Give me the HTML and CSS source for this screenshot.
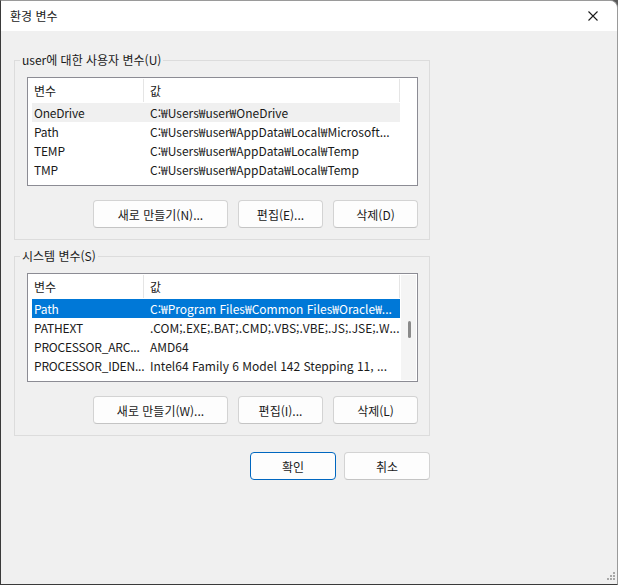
FILE: index.html
```html
<!DOCTYPE html>
<html lang="ko">
<head>
  <meta charset="UTF-8" />
  <title>환경 변수</title>
  <link rel="stylesheet" href="styles.css">
</head>
<body>

  <div class="window">
    <div class="titlebar">
      <span class="title">환경 변수</span>
      <button class="close" aria-label="닫기">
        <svg width="10" height="10" viewBox="0 0 10 10">
          <path d="M0.5 0.5 L9.5 9.5 M9.5 0.5 L0.5 9.5" stroke="#1b1b1b" stroke-width="1.1" fill="none" />
        </svg>
      </button>
    </div>

    <div class="content">
      <fieldset class="group">
        <legend>user에 대한 사용자 변수(U)</legend>
        <div class="list">
          <div class="list-main">
            <div class="list-head">
              <div class="hcell c1">변수</div>
              <div class="hcell c2">값</div>
            </div>
            <div class="row hover"><div class="c1">OneDrive</div><div class="c2">C:₩Users₩user₩OneDrive</div></div>
            <div class="row"><div class="c1">Path</div><div class="c2">C:₩Users₩user₩AppData₩Local₩Microsoft...</div></div>
            <div class="row"><div class="c1">TEMP</div><div class="c2">C:₩Users₩user₩AppData₩Local₩Temp</div></div>
            <div class="row"><div class="c1">TMP</div><div class="c2">C:₩Users₩user₩AppData₩Local₩Temp</div></div>
          </div>
          <div class="list-side"></div>
        </div>
        <div class="actions">
          <button class="btn wide">새로 만들기(N)...</button>
          <button class="btn">편집(E)...</button>
          <button class="btn">삭제(D)</button>
        </div>
      </fieldset>

      <fieldset class="group">
        <legend>시스템 변수(S)</legend>
        <div class="list">
          <div class="list-main">
            <div class="list-head">
              <div class="hcell c1">변수</div>
              <div class="hcell c2">값</div>
            </div>
            <div class="row selected"><div class="c1">Path</div><div class="c2">C:₩Program Files₩Common Files₩Oracle₩...</div></div>
            <div class="row"><div class="c1">PATHEXT</div><div class="c2">.COM;.EXE;.BAT;.CMD;.VBS;.VBE;.JS;.JSE;.W...</div></div>
            <div class="row"><div class="c1">PROCESSOR_ARC...</div><div class="c2">AMD64</div></div>
            <div class="row"><div class="c1">PROCESSOR_IDEN...</div><div class="c2">Intel64 Family 6 Model 142 Stepping 11, ...</div></div>
          </div>
          <div class="list-side scrollbar">
            <div class="thumb"></div>
          </div>
        </div>
        <div class="actions">
          <button class="btn wide">새로 만들기(W)...</button>
          <button class="btn">편집(I)...</button>
          <button class="btn">삭제(L)</button>
        </div>
      </fieldset>

      <div class="dialog-actions">
        <button class="btn main default">확인</button>
        <button class="btn main">취소</button>
      </div>
    </div>

    <svg class="grip" width="10" height="10" viewBox="0 0 10 10">
      <rect x="8" y="0" width="2" height="2" fill="#a8a8a8" />
      <rect x="5" y="3" width="2" height="2" fill="#a8a8a8" />
      <rect x="8" y="3" width="2" height="2" fill="#a8a8a8" />
      <rect x="2" y="6" width="2" height="2" fill="#a8a8a8" />
      <rect x="5" y="6" width="2" height="2" fill="#a8a8a8" />
      <rect x="8" y="6" width="2" height="2" fill="#a8a8a8" />
    </svg>
  </div>

</body>
</html>
```

FILE: styles.css
```css
* {
  box-sizing: border-box;
  margin: 0;
  padding: 0;
}

html, body {
  width: 618px;
  height: 585px;
  overflow: hidden;
  background: #5a5a5a;
  font-family: "Noto Sans CJK KR", "Noto Sans", sans-serif;
  font-size: 12px;
  color: #1a1a1a;
}

.window {
  position: relative;
  width: 618px;
  height: 585px;
  background: #f0f0f0;
  border: 1px solid #9a9a9a;
  border-left-color: #3a3a3a;
  border-bottom-color: #3a3a3a;
  border-radius: 0 8px 0 0;
  overflow: hidden;
}

.titlebar {
  height: 30px;
  background: #ffffff;
  display: flex;
  align-items: center;
  justify-content: space-between;
  padding-left: 9px;
}

.title {
  font-size: 12px;
  line-height: 16px;
  color: #1a1a1a;
  margin-top: -1px;
}

.close {
  width: 46px;
  height: 30px;
  border: none;
  background: transparent;
  display: flex;
  align-items: center;
  justify-content: center;
  padding-right: 3px;
}

.close svg {
  display: block;
}

.content {
  padding: 21px 0 0 13px;
}

.group {
  width: 416px;
  border: 1px solid #dcdcdc;
  padding: 9px 11px 11px 12px;
  margin-bottom: 8px;
}

.group legend {
  font-size: 12px;
  line-height: 16px;
  padding: 0 2px;
  margin-left: -7px;
  color: #1a1a1a;
}

.list {
  height: 109px;
  border: 1px solid #8c8c94;
  background: #ffffff;
  display: flex;
}

.list-main {
  width: 372px;
  padding-left: 4px;
}

.list-side {
  flex: 1;
}

.scrollbar {
  background: #f4f4f4;
  border: 1px solid #ffffff;
  display: flex;
  justify-content: center;
  padding-top: 46px;
}

.thumb {
  width: 3px;
  height: 17px;
  background: #8a8a8a;
  border-radius: 2px;
  margin-left: 1px;
}

.list-head {
  display: flex;
  height: 25px;
  align-items: stretch;
}

.hcell {
  display: flex;
  align-items: center;
  border-right: 1px solid #e5e5e5;
  margin-top: 1px;
  margin-bottom: 1px;
}

.list-head .c1 {
  width: 112px;
  padding-left: 2px;
}

.list-head .c2 {
  flex: 1;
  padding-left: 6px;
}

.row {
  display: flex;
  height: 19px;
  align-items: center;
  white-space: nowrap;
}

.row .c1 {
  width: 112px;
  padding-left: 2px;
  letter-spacing: -0.2px;
}

.row .c2 {
  flex: 1;
  padding-left: 6px;
  overflow: hidden;
}

.row.hover {
  background: #f0f0f0;
}

.row.selected {
  background: #0078d7;
  color: #ffffff;
}

.actions {
  display: flex;
  justify-content: flex-end;
  gap: 10px;
  margin-top: 14px;
}

.btn {
  height: 28px;
  width: 85px;
  font-family: inherit;
  font-size: 12px;
  color: #1a1a1a;
  background: #fdfdfd;
  border: 1px solid #d3d3d3;
  border-bottom-color: #c4c4c4;
  border-radius: 4px;
}

.btn.wide {
  width: 135px;
}

.dialog-actions {
  width: 416px;
  display: flex;
  justify-content: flex-end;
  gap: 8px;
  margin-top: 16px;
}

.btn.main {
  width: 86px;
}

.btn.default {
  border: 1px solid #0067c0;
}

.grip {
  position: absolute;
  right: 2px;
  bottom: 2px;
}
```
